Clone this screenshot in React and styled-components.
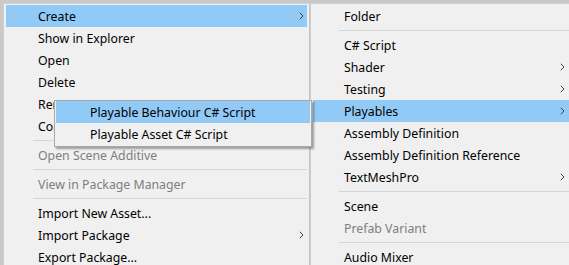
import React from "react"
import styled, { createGlobalStyle } from "styled-components"

const GlobalStyle = createGlobalStyle`
  html, body {
    margin: 0;
    padding: 0;
    background: #c9c9c9;
    overflow: hidden;
  }
  body {
    font-family: "Noto Sans", "Open Sans", sans-serif;
    font-size: 12.3px;
  }
`

const Desk = styled.div`
  position: relative;
  display: flex;
  align-items: flex-start;
  width: 569px;
  height: 265px;
  padding: 3px 0 0 3px;
  box-sizing: border-box;
  overflow: hidden;
`

const Menu = styled.div`
  flex: none;
  width: ${(props) => props.width}px;
  background: #f0f0f0;
  border: 1px solid #cfcfcf;
  border-right-color: ${(props) => (props.joined ? "#c4c4c4" : "#cfcfcf")};
  padding: 1px 2px 2px;
  box-sizing: border-box;
`

const Row = styled.div`
  display: flex;
  align-items: center;
  height: 22px;
  padding-left: ${(props) => props.indent}px;
  padding-right: ${(props) => props.tail}px;
  background: ${(props) => (props.active ? "#91c9f7" : "transparent")};
  color: ${(props) => (props.disabled ? "#7e7e7e" : "#000")};
  white-space: nowrap;
`

const Label = styled.span`
  flex: 1;
`

const Separator = styled.div`
  height: 7px;
  display: flex;
  align-items: center;
  padding-left: ${(props) => props.indent}px;

  &::after {
    content: "";
    flex: 1;
    height: 1px;
    background: #d6d6d6;
  }
`

const Popup = styled.div`
  position: absolute;
  left: 54px;
  top: 100px;
  width: 258px;
  background: #f0f0f0;
  border: 1px solid #a8a8a8;
  padding: 0 1px 1px;
  box-sizing: border-box;
  box-shadow: 2px 2px 2px rgba(0, 0, 0, 0.35);
`

const Chevron = () => (
  <svg width="5" height="8" viewBox="0 0 5 8">
    <path d="M0.8 0.8 L4 4 L0.8 7.2" fill="none" stroke="#444" strokeWidth="1" />
  </svg>
)

const Item = ({ label, sub, active, disabled, indent, tail = 8 }) => (
  <Row active={active} disabled={disabled} indent={indent} tail={tail}>
    <Label>{label}</Label>
    {sub && <Chevron />}
  </Row>
)

const leftItems = [
  { label: "Create", sub: true, active: true },
  { label: "Show in Explorer" },
  { label: "Open" },
  { label: "Delete" },
  { label: "Rename" },
  { label: "Copy Path" },
  { sep: true },
  { label: "Open Scene Additive", disabled: true },
  { sep: true },
  { label: "View in Package Manager", disabled: true },
  { sep: true },
  { label: "Import New Asset..." },
  { label: "Import Package", sub: true },
  { label: "Export Package..." },
]

const rightItems = [
  { label: "Folder" },
  { sep: true },
  { label: "C# Script" },
  { label: "Shader", sub: true },
  { label: "Testing", sub: true },
  { label: "Playables", sub: true, active: true },
  { label: "Assembly Definition" },
  { label: "Assembly Definition Reference" },
  { label: "TextMeshPro", sub: true },
  { sep: true },
  { label: "Scene" },
  { label: "Prefab Variant", disabled: true },
  { sep: true },
  { label: "Audio Mixer" },
]

const renderItems = (items, indent, tail) =>
  items.map((it, i) =>
    it.sep ? (
      <Separator key={i} indent={indent - 5} />
    ) : (
      <Item key={i} {...it} indent={indent} tail={tail} />
    )
  )

const App = () => {
  return (
    <>
      <GlobalStyle />
      <Desk>
        <Menu width={307} joined>
          {renderItems(leftItems, 32, 3)}
        </Menu>
        <Menu width={268}>{renderItems(rightItems, 31, 10)}</Menu>
        <Popup>
          <Item label="Playable Behaviour C# Script" active indent={34} />
          <Item label="Playable Asset C# Script" indent={34} />
        </Popup>
      </Desk>
    </>
  )
}

export default App
